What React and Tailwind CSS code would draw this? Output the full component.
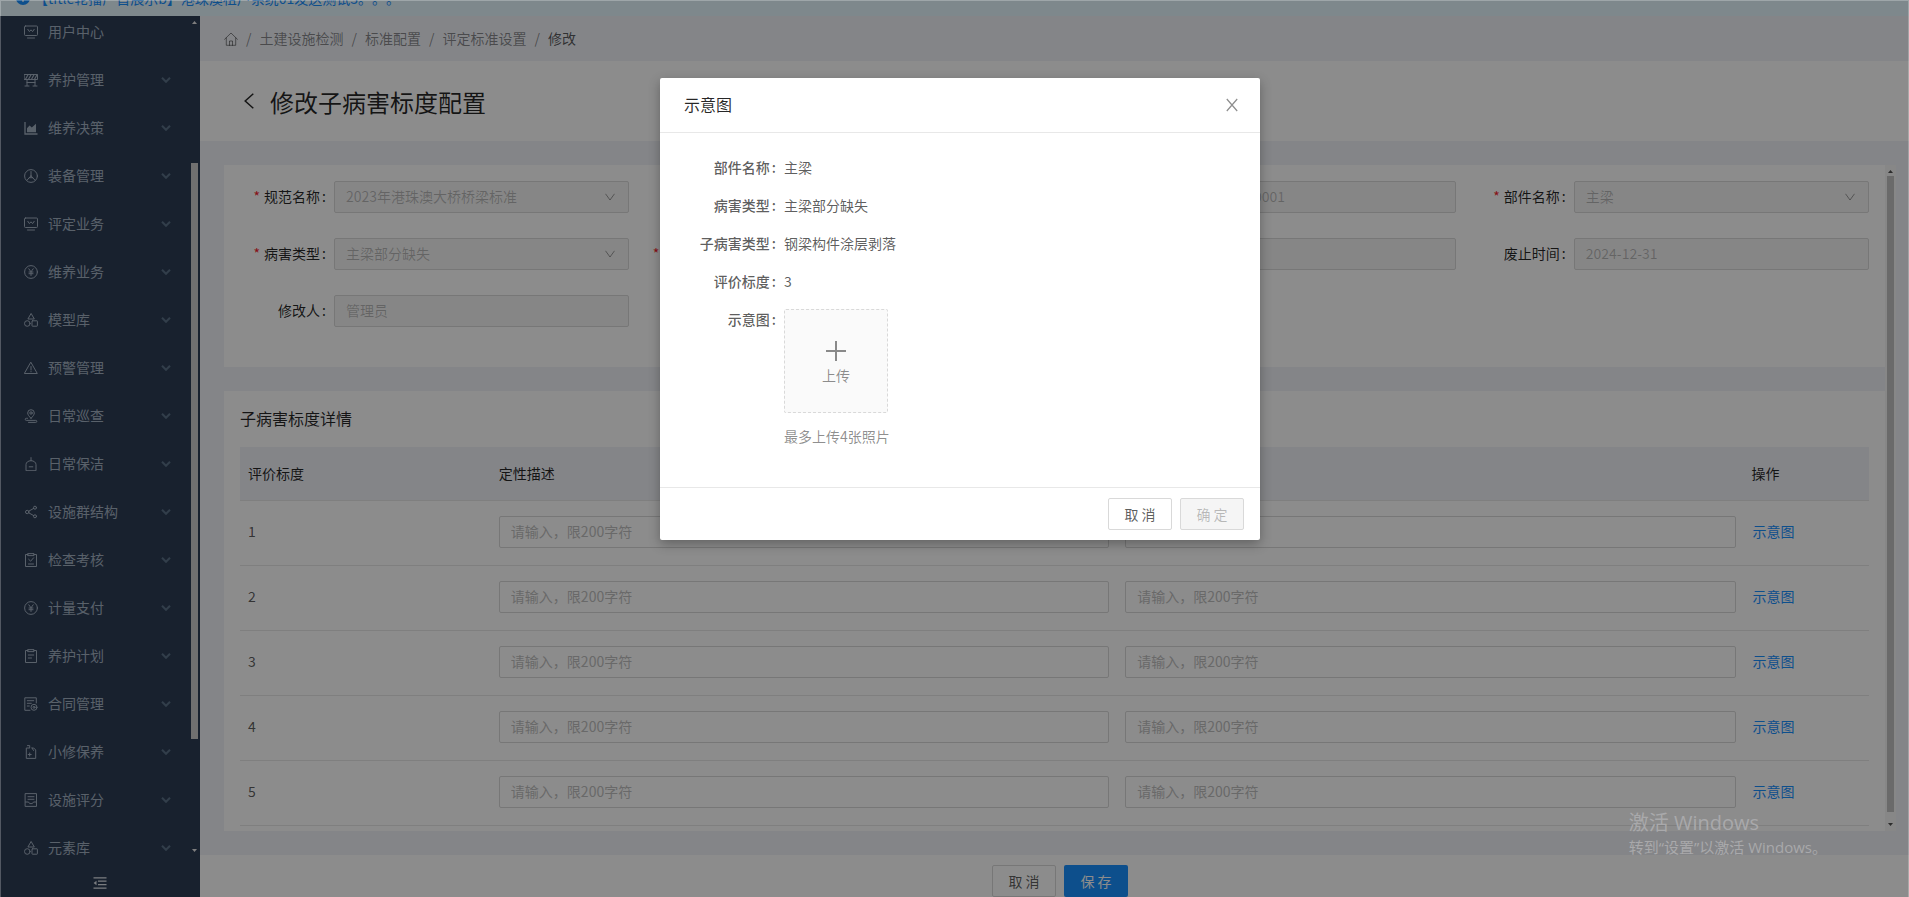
import React from "react";

const stroke = { fill: "none", stroke: "currentColor", strokeWidth: 1, strokeLinecap: "round", strokeLinejoin: "round" };

const glyphs = {
  monitor: (
    <g {...stroke}>
      <rect x="0.5" y="1" width="13" height="9.5" rx="1" />
      <path d="M3.8 4.3 5.4 6.6 7 4.8 8.6 6.6 10.2 4.3M3.5 13h7" />
    </g>
  ),
  barrier: (
    <g {...stroke}>
      <rect x="0.5" y="1.5" width="13" height="5" />
      <path d="M1.5 6.2 4 1.8M4.5 6.2 7 1.8M7.5 6.2 10 1.8M10.5 6.2 13 1.8" strokeWidth="1.2" />
      <path d="M3 7v5.5M11 7v5.5M3 9.5h8M1 13h4M9 13h4" />
    </g>
  ),
  chart: (
    <g>
      <path d="M1 1v12h12.5" fill="none" stroke="currentColor" strokeWidth="1.3" />
      <path d="M3 11.3V7.2l2.6-2.8 2.2 2 4.2-3.6v8.500z" fill="currentColor" />
    </g>
  ),
  equipment: (
    <g {...stroke}>
      <circle cx="7" cy="7" r="6.4" />
      <path d="M7 2.500v4.300M7 6.800 3 11.200M7 6.800l4 4.400M5.300 8.700h3.400" />
    </g>
  ),
  yen: (
    <g {...stroke}>
      <circle cx="7" cy="7" r="6.4" />
      <path d="M4.800 3.800 7 6.800l2.200-3M7 6.800v3.700M5 7h4M5 8.700h4" />
    </g>
  ),
  shapes: (
    <g {...stroke}>
      <path d="M7.300.8 10.300 6H4.300z" />
      <circle cx="3.300" cy="10.500" r="2.800" />
      <rect x="8" y="7.800" width="5.400" height="5.400" rx="0.500" />
    </g>
  ),
  warning: (
    <g {...stroke}>
      <path d="M7 1.500 13.300 12.500H.7z" />
      <path d="M7 5.500v3.500M7 10.500v.3" />
    </g>
  ),
  patrol: (
    <g {...stroke}>
      <path d="M7 9.300C4.800 7 3.700 5.600 3.700 4a3.300 3.300 0 0 1 6.600 0c0 1.600-1.100 3-3.300 5.300z" />
      <circle cx="7" cy="4" r="1.200" />
      <path d="M3.500 9.300H2.300a1 1 0 0 0 0 2.100h9.500a1 1 0 0 1 0 2H4.500" />
    </g>
  ),
  clean: (
    <g {...stroke}>
      <path d="M7 .6v3M2 13.300V7.600C2 5.400 4.200 3.700 7 3.700s5 1.700 5 3.900v5.700zM5.200 9.800h3.600" />
    </g>
  ),
  share: (
    <g {...stroke}>
      <circle cx="3.200" cy="7" r="1.700" />
      <circle cx="11" cy="2.700" r="1.500" />
      <circle cx="11" cy="11.300" r="1.500" />
      <path d="M4.700 6.200 9.700 3.400M4.700 7.800l5 2.800" />
    </g>
  ),
  check: (
    <g {...stroke}>
      <path d="M4 1.500H1.500v12h11v-12H10" />
      <path d="M4 .6h6v2H4zM4.600 6.200l2 2 3-3.400M4.500 11h5" />
    </g>
  ),
  plan: (
    <g {...stroke}>
      <path d="M4 1.500H1.500v12h11v-12H10" />
      <path d="M4 .6h6v2H4zM4.300 6h5.400M4.300 9h3.200" />
    </g>
  ),
  contract: (
    <g {...stroke}>
      <path d="M12.300 6V.8H.8v12.500h5.200M3.300 3.700h6.400M3.300 6.300h4M3.300 9h2" />
      <circle cx="10" cy="10.300" r="3" />
      <circle cx="10" cy="10.300" r="1" />
    </g>
  ),
  repair: (
    <g {...stroke}>
      <path d="M5.500 3H2.300v10.400h9.400V5L9.700 3H8M3.500.6h2.200v2M8 3l1.500 2.500M5.700 8v3M4.200 9.500h3" />
    </g>
  ),
  score: (
    <g {...stroke}>
      <rect x="1.500" y="0.600" width="11" height="12.800" />
      <path d="M4 3.700h6M4 6.300h6M1.500 9h3l1.200 1.600h2.600L9.500 9h3" />
    </g>
  ),
};

function Glyph({ name }) {
  return (
    <svg viewBox="0 0 14 14" className="size-3.5 shrink-0" aria-hidden="true">
      {glyphs[name]}
    </svg>
  );
}

function DownArrow({ className }) {
  return (
    <svg viewBox="0 0 10 8" className={className} fill="none" stroke="currentColor" aria-hidden="true">
      <path d="M.5 .8 5 7 9.500 .8" />
    </svg>
  );
}

const menu = [
  ["用户中心", "monitor"],
  ["养护管理", "barrier"],
  ["维养决策", "chart"],
  ["装备管理", "equipment"],
  ["评定业务", "monitor"],
  ["维养业务", "yen"],
  ["模型库", "shapes"],
  ["预警管理", "warning"],
  ["日常巡查", "patrol"],
  ["日常保洁", "clean"],
  ["设施群结构", "share"],
  ["检查考核", "check"],
  ["计量支付", "yen"],
  ["养护计划", "plan"],
  ["合同管理", "contract"],
  ["小修保养", "repair"],
  ["设施评分", "score"],
  ["元素库", "shapes"],
];

function Sidebar() {
  return (
    <aside className="flex w-[200px] shrink-0 flex-col bg-[#2d3d55] text-[#a3b1c2]">
      <div className="flex min-h-0 flex-1">
        <nav className="min-w-0 flex-1 overflow-hidden">
          <ul className="-mt-2">
            {menu.map(([label, icon], i) => (
              <li key={label}>
                <a href="#" className="flex h-12 items-center gap-2.5 pr-5 pl-6">
                  <Glyph name={icon} />
                  <span className="flex-1 pb-0.5">{label}</span>
                  {i > 0 && (
                    <svg viewBox="0 0 10 6" className="h-1.5 w-2.5 text-[#5b7188]" fill="none" stroke="currentColor" strokeWidth="2" aria-hidden="true">
                      <path d="M1 .8 5 4.800 9 .8" />
                    </svg>
                  )}
                </a>
              </li>
            ))}
          </ul>
        </nav>
        <div className="flex w-[9px] flex-col items-start pt-1 pb-1">
          <svg viewBox="0 0 7 4" className="h-1 w-[7px] text-[#e6e6e6]" aria-hidden="true">
            <path d="M1 4 3.500 1 6 4z" fill="currentColor" />
          </svg>
          <div className="flex min-h-0 w-full flex-1 flex-col pt-[139px] pb-[110px]">
            <div className="w-[7px] flex-1 bg-[#cccccc]" />
          </div>
          <svg viewBox="0 0 7 4" className="h-1 w-[7px] text-[#e6e6e6]" aria-hidden="true">
            <path d="M1 0 3.500 3 6 0z" fill="currentColor" />
          </svg>
        </div>
      </div>
      <button type="button" aria-label="收起菜单" className="flex h-10 items-start justify-center pt-5 text-[#dfe4ea]">
        <svg viewBox="0 0 14 12" className="h-3 w-3.5" fill="none" stroke="currentColor" strokeWidth="1.300" aria-hidden="true">
          <path d="M.5 .8h13M5 4.200h8.500M5 7.700h8.500M.5 11.200h13" />
          <path d="M3.500 3.800v4.400L.6 6z" fill="currentColor" stroke="none" />
        </svg>
      </button>
    </aside>
  );
}

function Field({ id, label, value, required, select }) {
  const box = "h-8 w-full rounded-xs border border-[#d9d9d9] bg-[#f5f5f5] px-[11px] pb-0.5 text-[#00000040]";
  return (
    <div className="flex h-8 items-center">
      <label htmlFor={id} className="flex w-[94px] shrink-0 items-center justify-end gap-1 pr-2 pb-0.5 whitespace-nowrap text-[#000000d9]">
        {required && <span className="text-[#f5222d]">*</span>}
        <span>
          {label}
          <span className="ml-0.5">:</span>
        </span>
      </label>
      <div className="relative min-w-0 flex-1">
        {select ? (
          <>
            <select id={id} disabled className={box + " appearance-none opacity-100"}>
              <option>{value}</option>
            </select>
            <DownArrow className="absolute top-3 right-3.5 h-2 w-2.5 text-[#00000060]" />
          </>
        ) : (
          <input id={id} disabled defaultValue={value} className={box} />
        )}
      </div>
    </div>
  );
}

function DetailTable() {
  return (
    <table className="w-full table-fixed border-separate border-spacing-0 text-left">
      <colgroup>
        <col className="w-[15.4%]" />
        <col className="w-[38.45%]" />
        <col className="w-[38.45%]" />
        <col className="w-[7.7%]" />
      </colgroup>
      <thead>
        <tr className="bg-[#f0f2f8] text-[#000000d9]">
          {["评价标度", "定性描述", "定量描述", "操作"].map((head) => (
            <th key={head} className="h-[54px] border-b border-[#e8e8e8] px-2 pb-0.5 font-normal">{head}</th>
          ))}
        </tr>
      </thead>
      <tbody className="leading-[30px]">
        {[1, 2, 3, 4, 5].map((n) => (
          <tr key={n} className="align-top">
            <td className="border-b border-[#e8e8e8] px-2 pt-[15px] pb-[17px]">{n}</td>
            {["定性描述", "定量描述"].map((kind) => (
              <td key={kind} className="border-b border-[#e8e8e8] px-2 pt-[15px] pb-[17px]">
                <input
                  aria-label={kind + n}
                  placeholder="请输入，限200字符"
                  className="block h-8 w-full rounded-xs border border-[#d9d9d9] bg-white px-[11px] pb-0.5 placeholder:text-[#bfbfbf]"
                />
              </td>
            ))}
            <td className="border-b border-[#e8e8e8] px-2 pt-[15px] pb-[17px]">
              <a href="#" className="ml-px text-[#1890ff]">示意图</a>
            </td>
          </tr>
        ))}
      </tbody>
    </table>
  );
}

const crumbs = ["土建设施检测", "标准配置", "评定标准设置"];

function Page() {
  return (
    <main className="flex min-w-0 flex-1 flex-col bg-[#f0f2f8]">
      <nav className="flex h-[45px] shrink-0 items-center gap-2 pl-6 text-[#00000073]">
        <a href="#" aria-label="首页">
          <svg viewBox="0 0 14 14" className="size-3.5" {...stroke} aria-hidden="true">
            <path d="M.6 7.300 7 1l6.400 6.300M2.300 6v7.300h9.400V6M5.500 13.300V9h3v4.300" />
          </svg>
        </a>
        {crumbs.map((c) => (
          <React.Fragment key={c}>
            <span className="pb-0.5">/</span>
            <a href="#" className="pb-0.5">{c}</a>
          </React.Fragment>
        ))}
        <span className="pb-0.5">/</span>
        <span className="pb-0.5 text-[#000000a6]">修改</span>
      </nav>
      <header className="flex h-20 shrink-0 items-center gap-4 bg-white pl-11 text-[#000000d9]">
        <button type="button" aria-label="返回">
          <svg viewBox="0 0 10 16" className="h-4 w-2.5" fill="none" stroke="currentColor" strokeWidth="1.500" aria-hidden="true">
            <path d="M9.300 .8 1.200 8l8.100 7.200" />
          </svg>
        </button>
        <h1 className="pt-0.5 text-2xl font-normal">修改子病害标度配置</h1>
      </header>

      <div className="my-6 mr-[13px] ml-6 flex min-h-0 flex-1">
        <div className="flex min-w-0 flex-1 flex-col gap-6 overflow-hidden">
          <section className="grid shrink-0 grid-cols-4 gap-x-6 gap-y-[25px] bg-white px-4 pt-4 pb-10">
            <Field id="spec" label="规范名称" value="2023年港珠澳大桥桥梁标准" required select />
            <Field id="version" label="版本号" value="1" />
            <Field id="code" label="规范编号" value="HZMB-BZ-000001" />
            <Field id="part" label="部件名称" value="主梁" required select />
            <Field id="disease" label="病害类型" value="主梁部分缺失" required select />
            <Field id="sub" label="子病害类型" value="钢梁构件涂层剥落" required select />
            <Field id="start" label="启用时间" value="2023-01-01" />
            <Field id="end" label="废止时间" value="2024-12-31" />
            <Field id="editor" label="修改人" value="管理员" />
          </section>
          <section className="shrink-0 bg-white px-4 pt-[15px]">
            <h2 className="mb-[17px] text-base leading-6 font-normal text-[#000000d9]">子病害标度详情</h2>
            <DetailTable />
            <div className="h-16" />
          </section>
        </div>
        <div className="flex w-[11px] shrink-0 flex-col items-center gap-[3px] bg-[#f6f6f6] pt-1 pb-1">
          <svg viewBox="0 0 7 4" className="h-1 w-[7px] text-[#505050]" aria-hidden="true">
            <path d="M1 4 3.500 1 6 4z" fill="currentColor" />
          </svg>
          <div className="mb-2 w-[7px] flex-1 bg-[#c1c1c1]" />
          <svg viewBox="0 0 7 4" className="h-1 w-[7px] text-[#505050]" aria-hidden="true">
            <path d="M1 0 3.500 3 6 0z" fill="currentColor" />
          </svg>
        </div>
      </div>

      <footer className="flex h-[42px] shrink-0 items-start justify-center gap-2 overflow-hidden bg-white pt-2.5 pl-[11px]">
        <button type="button" className="h-8 w-16 shrink-0 rounded-xs border border-[#d9d9d9] bg-white">取 消</button>
        <button type="button" className="h-8 w-16 shrink-0 rounded-xs bg-[#1890ff] text-white">保 存</button>
      </footer>
    </main>
  );
}

const details = [
  ["部件名称", "主梁"],
  ["病害类型", "主梁部分缺失"],
  ["子病害类型", "钢梁构件涂层剥落"],
  ["评价标度", "3"],
];

function DetailRow({ label, children }) {
  return (
    <div className="flex">
      <dt className="w-[124px] shrink-0 pr-2 text-right font-medium">
        {label}
        <span className="ml-0.5">:</span>
      </dt>
      <dd>{children}</dd>
    </div>
  );
}

function Modal() {
  return (
    <div role="dialog" aria-modal="true" aria-labelledby="dialog-title" className="w-[600px] rounded-xs bg-white text-[#000000a6] shadow-[0_4px_12px_rgba(0,0,0,0.3)]">
      <div className="flex h-[55px] items-center justify-between border-b border-[#e8e8e8] pr-[22px] pl-6">
        <h2 id="dialog-title" className="pb-0.5 text-base font-normal text-[#000000d9]">示意图</h2>
        <button type="button" aria-label="关闭" className="text-[#00000073]">
          <svg viewBox="0 0 12 14" className="h-3.5 w-3" fill="none" stroke="currentColor" strokeWidth="1.200" aria-hidden="true">
            <path d="M.8 1 11.200 13M11.200 1 .8 13" />
          </svg>
        </button>
      </div>
      <dl className="flex flex-col gap-4 pt-[23px] pb-10">
        {details.map(([label, value]) => (
          <DetailRow key={label} label={label}>{value}</DetailRow>
        ))}
        <DetailRow label="示意图">
          <button type="button" className="mt-px flex size-[104px] flex-col items-center justify-center rounded-xs border border-dashed border-[#d9d9d9] bg-[#fafafa] text-[#00000073]">
            <svg viewBox="0 0 20 20" className="mt-1 mb-[3px] size-5" fill="none" stroke="currentColor" strokeWidth="2" aria-hidden="true">
              <path d="M10 0v20M0 10h20" />
            </svg>
            上传
          </button>
          <p className="mt-3 text-[#00000073]">最多上传4张照片</p>
        </DetailRow>
      </dl>
      <div className="flex justify-end gap-2 border-t border-[#e8e8e8] px-4 py-2.5">
        <button type="button" className="h-8 w-16 rounded-xs border border-[#d9d9d9] bg-white">取 消</button>
        <button type="button" disabled className="h-8 w-16 rounded-xs border border-[#d9d9d9] bg-[#f5f5f5] text-[#00000040]">确 定</button>
      </div>
    </div>
  );
}

export default function App() {
  return (
    <div className="relative flex h-screen flex-col overflow-hidden font-['Noto_Sans_CJK_SC',sans-serif] text-sm leading-[22px] text-[#000000a6] [text-spacing-trim:space-all]">
      <div className="flex h-4 shrink-0 items-end overflow-hidden bg-[#e6f7ff]">
        <div className="flex h-[37px] items-center gap-1 pl-4 text-[#1890ff]">
          <svg viewBox="0 0 14 14" className="size-3.5" aria-hidden="true">
            <circle cx="7" cy="7" r="7" fill="currentColor" />
            <path d="M7 3v.5M7 6v5" stroke="#fff" strokeWidth="1.200" />
          </svg>
          <span className="whitespace-nowrap">【title轮播产首展示b】港珠澳租户系统01发送测试3。。。</span>
        </div>
      </div>
      <div className="flex min-h-0 flex-1">
        <Sidebar />
        <Page />
      </div>

      <div className="absolute inset-0 flex items-start justify-center border-x border-t border-white/25 bg-black/45 pt-[77px] pl-[11px]">
        <Modal />
      </div>

      <div className="pointer-events-none absolute right-[82px] bottom-[40px] font-['Open_Sans','Noto_Sans_CJK_SC',sans-serif] text-[#a9a9ab]">
        <p className="text-xl leading-7">激活 Windows</p>
        <p className="text-[15px] leading-5">转到“设置”以激活 Windows。</p>
      </div>
    </div>
  );
}
